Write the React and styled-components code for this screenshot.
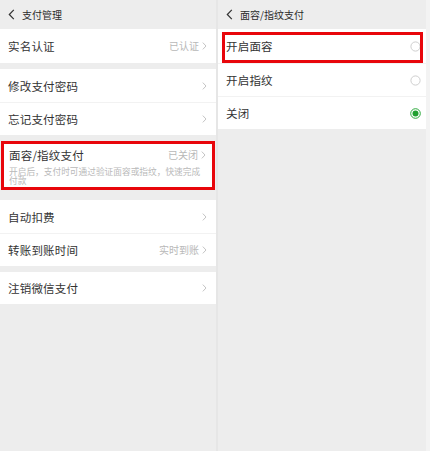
import React from "react";
import styled, { createGlobalStyle } from "styled-components";

const Global = createGlobalStyle`
  html, body { margin: 0; padding: 0; background: #ededed; }
  body { font-family: "Noto Sans CJK SC", "Noto Sans", sans-serif; }
`;

const Page = styled.div`
  display: grid;
  grid-template-columns: 216px 2px 208px 4px;
  width: 430px;
  height: 451px;
  overflow: hidden;
  background: #ededed;
`;

const Panel = styled.div`
  display: flex;
  flex-direction: column;
  background: #ededed;
`;

const Divider = styled.div`
  background: #e6e6e6;
`;

const Edge = styled.div`
  background: #f3f3f3;
`;

const Header = styled.div`
  height: 29px;
  display: flex;
  align-items: center;
  gap: 7px;
  padding-left: 8px;
  font-size: 10px;
  color: #2a2a2a;
  box-sizing: border-box;
`;

const Group = styled.div`
  display: flex;
  flex-direction: column;
  background: #fff;
  margin-top: ${(p) => p.$gap || 0}px;
`;

const Row = styled.div`
  position: relative;
  display: flex;
  align-items: center;
  justify-content: space-between;
  height: ${(p) => p.$h || 33}px;
  padding: 0 ${(p) => p.$pr || 9}px 0 8px;
  box-sizing: border-box;
  background: #fff;
  & + & {
    border-top: 1px solid #f2f2f2;
  }
`;

const Label = styled.span`
  font-size: 11.5px;
  line-height: 14px;
  color: #333;
  letter-spacing: 0.2px;
`;

const Right = styled.span`
  display: flex;
  align-items: center;
  gap: 3px;
  font-size: 10px;
  line-height: 14px;
  color: #b8b8b8;
`;

const FaceRow = styled.div`
  margin: 6px 1px 0 1px;
  height: 49px;
  background: #fff;
  border: 3px solid #e8060b;
  box-sizing: border-box;
  padding: 4px 6px 0 5px;
  display: flex;
  flex-direction: column;
`;

const FaceTop = styled.div`
  display: flex;
  align-items: center;
  justify-content: space-between;
  height: 14px;
`;

const Desc = styled.div`
  font-size: 8.7px;
  line-height: 9px;
  color: #b9b9b9;
  margin-top: 5px;
  width: 194px;
`;

const MarkBox = styled.div`
  position: absolute;
  left: 4px;
  right: 3px;
  top: 3px;
  bottom: 0;
  border: 3px solid #e8060b;
  pointer-events: none;
`;

const RadioWrap = styled.span`
  display: inline-flex;
  width: 11px;
  height: 11px;
`;

const Back = () => (
  <svg width="7" height="11" viewBox="0 0 7 11">
    <path d="M5.8 0.8 L1.3 5.5 L5.8 10.2" fill="none" stroke="#333" strokeWidth="1.2" />
  </svg>
);

const Chevron = () => (
  <svg width="5" height="8" viewBox="0 0 5 8">
    <path d="M0.8 0.6 L4 4 L0.8 7.4" fill="none" stroke="#c4c4c4" strokeWidth="1" />
  </svg>
);

const Radio = ({ on }) => (
  <RadioWrap>
    <svg width="11" height="11" viewBox="0 0 11 11">
      {on ? (
        <>
          <circle cx="5.5" cy="5.5" r="4.8" fill="none" stroke="#2aa83a" strokeWidth="1" />
          <circle cx="5.5" cy="5.5" r="3" fill="#1fa02f" />
        </>
      ) : (
        <circle cx="5.5" cy="5.5" r="4.6" fill="none" stroke="#c8c8c8" strokeWidth="0.9" />
      )}
    </svg>
  </RadioWrap>
);

export default function App() {
  return (
    <>
      <Global />
      <Page>
        <Panel>
          <Header>
            <Back />
            <span>支付管理</span>
          </Header>
          <Group>
            <Row $h={34}>
              <Label>实名认证</Label>
              <Right>
                已认证
                <Chevron />
              </Right>
            </Row>
          </Group>
          <Group $gap={6}>
            <Row>
              <Label>修改支付密码</Label>
              <Right>
                <Chevron />
              </Right>
            </Row>
            <Row>
              <Label>忘记支付密码</Label>
              <Right>
                <Chevron />
              </Right>
            </Row>
          </Group>
          <FaceRow>
            <FaceTop>
              <Label>面容/指纹支付</Label>
              <Right>
                已关闭
                <Chevron />
              </Right>
            </FaceTop>
            <Desc>开启后，支付时可通过验证面容或指纹，快速完成付款</Desc>
          </FaceRow>
          <Group $gap={10}>
            <Row>
              <Label>自动扣费</Label>
              <Right>
                <Chevron />
              </Right>
            </Row>
            <Row>
              <Label>转账到账时间</Label>
              <Right>
                实时到账
                <Chevron />
              </Right>
            </Row>
          </Group>
          <Group $gap={6}>
            <Row $h={32}>
              <Label>注销微信支付</Label>
              <Right>
                <Chevron />
              </Right>
            </Row>
          </Group>
        </Panel>
        <Divider />
        <Panel>
          <Header>
            <Back />
            <span>面容/指纹支付</span>
          </Header>
          <Group>
            <Row $h={34} $pr={5}>
              <Label>开启面容</Label>
              <Radio />
              <MarkBox />
            </Row>
            <Row $pr={5}>
              <Label>开启指纹</Label>
              <Radio />
            </Row>
            <Row $pr={5}>
              <Label>关闭</Label>
              <Radio on />
            </Row>
          </Group>
        </Panel>
        <Edge />
      </Page>
    </>
  );
}
